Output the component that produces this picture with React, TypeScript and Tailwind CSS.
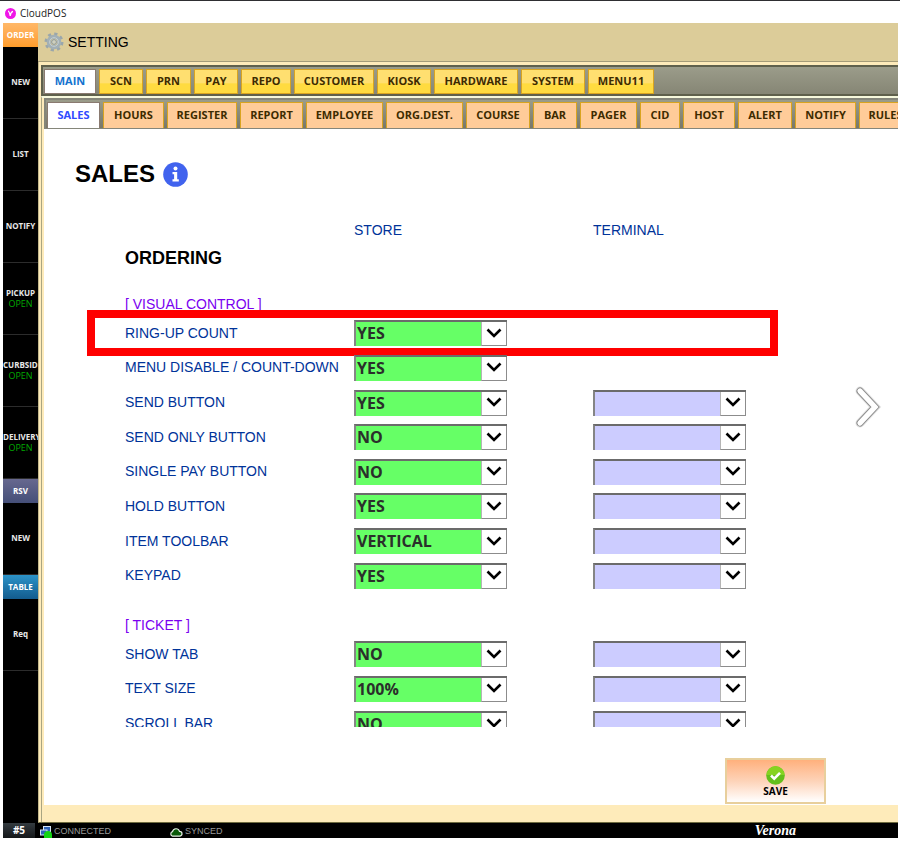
import { useState } from "react";
import clsx from "clsx";

const mainTabs = [
  { name: "MAIN", width: "w-[52px]" },
  { name: "SCN", width: "w-[44px]" },
  { name: "PRN", width: "w-[45px]" },
  { name: "PAY", width: "w-[44px]" },
  { name: "REPO", width: "w-[50px]" },
  { name: "CUSTOMER", width: "w-[80px]" },
  { name: "KIOSK", width: "w-[54px]" },
  { name: "HARDWARE", width: "w-[84px]" },
  { name: "SYSTEM", width: "w-[64px]" },
  { name: "MENU11", width: "w-[66px]" },
];

const subTabs = [
  { name: "SALES", width: "w-[53px]" },
  { name: "HOURS", width: "w-[61px]" },
  { name: "REGISTER", width: "w-[70px]" },
  { name: "REPORT", width: "w-[63px]" },
  { name: "EMPLOYEE", width: "w-[77px]" },
  { name: "ORG.DEST.", width: "w-[77px]" },
  { name: "COURSE", width: "w-[64px]" },
  { name: "BAR", width: "w-[44px]" },
  { name: "PAGER", width: "w-[57px]" },
  { name: "CID", width: "w-[40px]" },
  { name: "HOST", width: "w-[52px]" },
  { name: "ALERT", width: "w-[54px]" },
  { name: "NOTIFY", width: "w-[61px]" },
  { name: "RULES", width: "w-[53px]" },
];

type Setting = {
  label: string;
  value: string;
  terminal?: boolean;
  marked?: boolean;
};

const visualControl: Setting[] = [
  { label: "RING-UP COUNT", value: "YES", marked: true },
  { label: "MENU DISABLE / COUNT-DOWN", value: "YES" },
  { label: "SEND BUTTON", value: "YES", terminal: true },
  { label: "SEND ONLY BUTTON", value: "NO", terminal: true },
  { label: "SINGLE PAY BUTTON", value: "NO", terminal: true },
  { label: "HOLD BUTTON", value: "YES", terminal: true },
  { label: "ITEM TOOLBAR", value: "VERTICAL", terminal: true },
  { label: "KEYPAD", value: "YES", terminal: true },
];

const ticket: Setting[] = [
  { label: "SHOW TAB", value: "NO", terminal: true },
  { label: "TEXT SIZE", value: "100%", terminal: true },
  { label: "SCROLL BAR", value: "NO", terminal: true },
];

const SideButton = ({ label, open }: { label: string; open?: boolean }) => (
  <button className="flex h-[72px] w-full shrink-0 flex-col justify-center overflow-hidden border-b border-[#2c2c2c] pb-0.5 leading-[11px] text-[#e8e8e8]">
    <span className={clsx("whitespace-nowrap", label.length > 6 ? "self-start" : "self-center")}>
      {label}
    </span>
    {open && (
      <span className="self-center text-[9px] font-normal text-[#00a800]">OPEN</span>
    )}
  </button>
);

const Sidebar = () => (
  <nav className="flex w-[35px] shrink-0 flex-col bg-black font-['Open_Sans',sans-serif] text-[8px] font-bold text-white">
    <button className="h-6 shrink-0 bg-linear-to-b from-[#ffb868] to-[#ff9d2a]">
      ORDER
    </button>
    <SideButton label="NEW" />
    <SideButton label="LIST" />
    <SideButton label="NOTIFY" />
    <SideButton label="PICKUP" open />
    <SideButton label="CURBSID" open />
    <SideButton label="DELIVERY" open />
    <button className="h-6 shrink-0 bg-linear-to-b from-[#67688f] to-[#454f78]">
      RSV
    </button>
    <SideButton label="NEW" />
    <button className="h-6 shrink-0 bg-linear-to-b from-[#2c93c8] to-[#135c8e]">
      TABLE
    </button>
    <SideButton label="Req" />
  </nav>
);

const Select = ({
  id,
  value,
  name,
}: {
  id?: string;
  value?: string;
  name?: string;
}) => (
  <div className="relative w-[153px]">
    <select
      id={id}
      aria-label={name}
      defaultValue={value}
      className={clsx(
        "block h-[26px] w-full appearance-none border-t-2 border-l-2 border-t-[#6b6b6b] border-l-[#858585] pb-0.5 pl-px font-['Open_Sans',sans-serif] text-[16px] leading-[22px] font-bold text-[#2b2f2b]",
        value ? "bg-[#66ff66]" : "bg-[#ccccff]"
      )}
    >
      <option>{value}</option>
    </select>
    <span className="pointer-events-none absolute top-0.5 right-0 flex h-6 w-[26px] items-center justify-center border-r border-b border-l border-[#8c8c8c] border-l-[#b5b5b5] bg-white">
      <svg width="16" height="10" viewBox="0 0 16 10" className="-mt-0.5">
        <path
          d="M1.5 1.5L8 8L14.5 1.5"
          fill="none"
          stroke="#000"
          strokeWidth="2.6"
        />
      </svg>
    </span>
  </div>
);

const SettingRow = ({ label, value, terminal, marked }: Setting) => {
  const id = label.toLowerCase().replace(/[^a-z]+/g, "-");
  return (
    <div className="relative grid grid-cols-[229px_239px_153px] items-center">
      <label htmlFor={id} className="whitespace-nowrap">
        {label}
      </label>
      <Select id={id} value={value} />
      {terminal && <Select name={label + " terminal"} />}
      {marked && (
        <div className="pointer-events-none absolute -top-1.5 -left-[38px] h-[46px] w-[691px] border-8 border-[#ff0000]"></div>
      )}
    </div>
  );
};

const Gear = () => (
  <svg width="20" height="20" viewBox="0 0 20 20">
    <circle
      cx="10"
      cy="10"
      r="8"
      fill="none"
      stroke="#9aa6ab"
      strokeWidth="3"
      strokeDasharray="3.14 3.14"
    />
    <circle cx="10" cy="10" r="5.3" fill="none" stroke="#a3b0b5" strokeWidth="4" />
    <circle cx="10" cy="10" r="4.4" fill="none" stroke="#c3ced2" strokeWidth="1" />
    <circle cx="10" cy="10" r="2.4" fill="#cfd0bd" stroke="#8a979d" strokeWidth="1" />
  </svg>
);

const StatusBar = () => (
  <footer className="flex h-[15px] shrink-0 items-center bg-black font-['Liberation_Sans',Arial,sans-serif] text-[9px] leading-[15px] text-[#9a9a9a]">
    <span className="w-8 bg-linear-to-b from-[#343b40] to-[#15181a] text-center font-['Open_Sans',sans-serif] text-[10px] font-bold text-white">
      #5
    </span>
    <div className="flex w-[130px] items-center gap-0.5 pt-0.5 pl-[5px]">
      <svg width="12" height="12" viewBox="0 0 12 12">
        <rect x="3.5" y="0.5" width="7" height="5.5" fill="#2d62b8" stroke="#d7e4f5" />
        <rect x="0.5" y="4" width="6.5" height="5" fill="#2d62b8" stroke="#d7e4f5" />
        <path d="M4 12V9a4 4 0 0 1 8 0v3z" fill="#14d414" />
      </svg>
      CONNECTED
    </div>
    <div className="flex items-center gap-0.5 pt-0.5 pl-1">
      <svg width="14" height="10" viewBox="0 0 14 10">
        <path
          d="M3.5 9.2a2.4 2.4 0 0 1 0-4.6 3.6 3.6 0 0 1 7-.2 2.4 2.4 0 0 1 .2 4.8z"
          fill="#0a5a0a"
          stroke="#e6efe6"
          strokeWidth="1.2"
        />
      </svg>
      SYNCED
    </div>
    <span className="mr-[102px] ml-auto font-['Liberation_Serif',serif] text-[14px] font-bold text-white italic">
      Verona
    </span>
  </footer>
);

const App = () => {
  const [main, setMain] = useState("MAIN");
  const [sub, setSub] = useState("SALES");

  return (
    <div className="flex h-screen flex-col overflow-hidden border-t border-[#2e2e32] bg-white pr-0.5 pb-[3px] pl-[3px] font-['Liberation_Sans',Arial,sans-serif] text-black">
      <div className="flex h-[22px] shrink-0 items-center gap-1 pt-0.5 pl-0.5 font-['Open_Sans',sans-serif] text-[10px] text-[#222222]">
        <svg width="11" height="11" viewBox="0 0 11 11">
          <circle cx="5.5" cy="5.5" r="5.5" fill="#f015e8" />
          <path d="M3 3.2q1.2 0 2.2 4.6Q5.8 4 8 3.4" fill="none" stroke="#fff" strokeWidth="1.2" />
        </svg>
        CloudPOS
      </div>

      <div className="flex min-h-0 flex-1">
        <Sidebar />

        <main className="flex min-w-0 flex-1 flex-col bg-[#feebba]">
          <header className="flex h-[39px] shrink-0 items-center gap-1 border-b border-[#a59c78] bg-[#dccc99] pl-1.5 text-[14px]">
            <Gear />
            SETTING
          </header>

          <div className="flex min-h-0 flex-1 flex-col border-b border-l border-b-[#6d6a3e] border-l-[#c4b98c] pt-[3px] pl-0.5">
            <div className="flex h-[31px] shrink-0 gap-[3px] overflow-hidden border-y-2 border-l-2 border-[#5f604c] bg-linear-to-b from-[#9b9c8a] to-[#868675] pt-0.5 pl-px font-['Open_Sans',sans-serif] text-[11px] font-bold">
              {mainTabs.map((tab) => (
                <button
                  key={tab.name}
                  onClick={() => setMain(tab.name)}
                  className={clsx(
                    "shrink-0 border",
                    tab.width,
                    tab.name === main
                      ? "border-[#8a7a70] bg-white text-[#1473cf]"
                      : "border-[#d9a420] bg-linear-to-b from-[#ffdf70] from-55% to-[#ffdb40] to-60% text-[#3d2b00]"
                  )}
                >
                  {tab.name}
                </button>
              ))}
            </div>

            <div className="flex min-h-0 flex-1 flex-col border-t-2 border-l border-t-[#f6f8dc] border-l-[#a9a582] pl-0.5">
              <div className="flex h-[31px] shrink-0 gap-[3px] overflow-hidden border-t-2 border-b border-l-2 border-[#85867a] bg-linear-to-b from-[#9b9c8a] to-[#77786a] pt-0.5 pl-px font-['Open_Sans',sans-serif] text-[11px] font-bold">
                {subTabs.map((tab) => (
                  <button
                    key={tab.name}
                    onClick={() => setSub(tab.name)}
                    className={clsx(
                      "shrink-0 border border-b-0",
                      tab.width,
                      tab.name === sub
                        ? "border-[#8a7a70] bg-white text-[#2f4bff]"
                        : "border-[#d9a420] bg-[#ffcc99] text-[#3d2b00]"
                    )}
                  >
                    {tab.name}
                  </button>
                ))}
              </div>

              <section className="relative mb-[17px] flex min-h-0 flex-1 flex-col bg-white text-[14px] text-[#003399]">
                <div className="mt-[27px] flex h-9 shrink-0 items-center gap-2 pl-[31px]">
                  <h1 className="text-[24px] font-bold text-black">SALES</h1>
                  <button aria-label="Info">
                    <svg width="25" height="25" viewBox="0 0 25 25">
                      <circle cx="12.5" cy="12.5" r="12.3" fill="#4163ee" />
                      <circle cx="12.5" cy="6.6" r="2" fill="#fff" />
                      <path d="M9.5 10h4.7v7.3h1.6v2.2H9.5v-2.2h1.6v-5.1H9.5z" fill="#fff" />
                    </svg>
                  </button>
                </div>

                <div className="mt-7 grid h-5 shrink-0 grid-cols-[229px_239px_153px] items-center pl-[81px]">
                  <span className="col-start-2">STORE</span>
                  <span>TERMINAL</span>
                </div>

                <div className="mt-1 min-h-0 flex-1 overflow-y-auto pl-[81px] [scrollbar-width:none]">
                  <h2 className="text-[18px] leading-7 font-bold text-black">ORDERING</h2>
                  <h3 className="mt-[22px] mb-0.5 leading-5 text-[#7a00f0]">
                    [ VISUAL CONTROL ]
                  </h3>
                  <div className="grid h-[277px] auto-rows-fr">
                    {visualControl.map((item) => (
                      <SettingRow key={item.label} {...item} />
                    ))}
                  </div>
                  <h3 className="mt-[22px] mb-0.5 leading-5 text-[#7a00f0]">[ TICKET ]</h3>
                  <div className="grid h-[104px] auto-rows-fr">
                    {ticket.map((item) => (
                      <SettingRow key={item.label} {...item} />
                    ))}
                  </div>
                </div>

                <div className="flex shrink-0 justify-end pt-[31px] pr-[72px] pb-px">
                  <button className="flex h-[46px] w-[101px] flex-col items-center justify-end border-2 border-[#e8cf9c] bg-linear-to-b from-[#ffb07c] via-[#fdd3b8] to-white pb-1 font-['Open_Sans',sans-serif] text-[10px] leading-[13px] font-bold text-black">
                    <svg width="19" height="19" viewBox="0 0 19 19">
                      <circle cx="9.5" cy="9.5" r="9.3" fill="#63bf1b" />
                      <path d="M.6 9a8.9 8.9 0 0 1 17.8 0z" fill="#86d321" />
                      <path d="M5 9.5l3.2 3.2L14 6.8" fill="none" stroke="#fff" strokeWidth="2.6" />
                    </svg>
                    SAVE
                  </button>
                </div>

                <button aria-label="Next" className="absolute top-[254px] right-3">
                  <svg
                    width="34"
                    height="48"
                    viewBox="0 0 34 48"
                    strokeLinecap="round"
                    strokeLinejoin="miter"
                    fill="none"
                  >
                    <path d="M8 8L23 24L8 40" stroke="#e2e2e2" strokeWidth="9" />
                    <path d="M8 8L23 24L8 40" stroke="#8c8c8c" strokeWidth="7" />
                    <path d="M8 8L23 24L8 40" stroke="#fff" strokeWidth="5.2" />
                  </svg>
                </button>
              </section>
            </div>
          </div>
        </main>
      </div>

      <StatusBar />
    </div>
  );
};

export default App;
